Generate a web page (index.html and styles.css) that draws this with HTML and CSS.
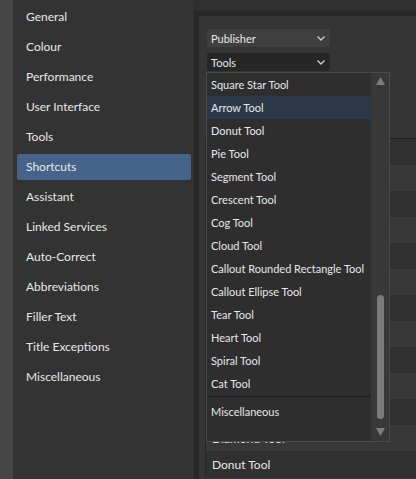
FILE: index.html
```html
<!DOCTYPE html>
<html lang="en">
<head>
  <meta charset="UTF-8">
  <meta name="viewport" content="width=device-width, initial-scale=1.0">
  <title>Preferences - Shortcuts</title>
  <link rel="stylesheet" href="styles.css">
</head>
<body>
  <div class="edge"></div>

  <nav class="sidebar">
    <div class="nav-item">General</div>
    <div class="nav-item">Colour</div>
    <div class="nav-item">Performance</div>
    <div class="nav-item">User Interface</div>
    <div class="nav-item">Tools</div>
    <div class="nav-item selected">Shortcuts</div>
    <div class="nav-item">Assistant</div>
    <div class="nav-item">Linked Services</div>
    <div class="nav-item">Auto-Correct</div>
    <div class="nav-item">Abbreviations</div>
    <div class="nav-item">Filler Text</div>
    <div class="nav-item">Title Exceptions</div>
    <div class="nav-item">Miscellaneous</div>
  </nav>

  <main>
    <div class="panel">
      <div class="content">
        <div class="selects">
          <div class="select light">
            <span>Publisher</span>
            <svg class="chevron" width="8" height="5" viewBox="0 0 8 5"><polyline points="0.5,0.5 4,4 7.5,0.5" fill="none" stroke="#cfcfcf" stroke-width="1.3"/></svg>
          </div>
          <div class="select dark">
            <span>Tools</span>
            <svg class="chevron" width="8" height="5" viewBox="0 0 8 5"><polyline points="0.5,0.5 4,4 7.5,0.5" fill="none" stroke="#cfcfcf" stroke-width="1.3"/></svg>
          </div>
        </div>

        <div class="table">
          <div class="row"></div>
          <div class="row"></div>
          <div class="row"></div>
          <div class="row"></div>
          <div class="row"></div>
          <div class="row"></div>
          <div class="row"></div>
          <div class="row"></div>
          <div class="row"></div>
          <div class="row"></div>
          <div class="row"></div>
          <div class="row">Diamond Tool</div>
          <div class="row">Donut Tool</div>
        </div>

        <!-- open dropdown for the Tools select -->
        <div class="dropdown">
          <div class="options">
            <div class="option">Square Star Tool</div>
            <div class="option hover">Arrow Tool</div>
            <div class="option">Donut Tool</div>
            <div class="option">Pie Tool</div>
            <div class="option">Segment Tool</div>
            <div class="option">Crescent Tool</div>
            <div class="option">Cog Tool</div>
            <div class="option">Cloud Tool</div>
            <div class="option">Callout Rounded Rectangle Tool</div>
            <div class="option">Callout Ellipse Tool</div>
            <div class="option">Tear Tool</div>
            <div class="option">Heart Tool</div>
            <div class="option">Spiral Tool</div>
            <div class="option">Cat Tool</div>
            <div class="separator"></div>
            <div class="option">Miscellaneous</div>
          </div>
          <div class="scrollbar">
            <svg width="9" height="8" viewBox="0 0 9 8"><polygon points="4.5,0 9,8 0,8" fill="#7c7c7c"/></svg>
            <div class="track"><div class="thumb"></div></div>
            <svg width="9" height="8" viewBox="0 0 9 8"><polygon points="0,0 9,0 4.5,8" fill="#7c7c7c"/></svg>
          </div>
        </div>
      </div>
    </div>
  </main>
</body>
</html>
```

FILE: styles.css
```css
/* Global */
body {
  margin: 0;
  padding: 0;
  background: #2f2f2f;
  font-family: 'Lato', 'Noto Sans', sans-serif;
  font-size: 12px;
  color: #e8e8e8;
  display: flex;
  height: 479px;
  overflow: hidden;
}

.edge {
  width: 13px;
  flex-shrink: 0;
  background: #474747;
}

/* Sidebar */
.sidebar {
  width: 181px;
  flex-shrink: 0;
  background: #333333;
  padding: 4px 3px 0 4px;
  box-sizing: border-box;
  display: flex;
  flex-direction: column;
  gap: 4px;
}

.nav-item {
  height: 26px;
  line-height: 25px;
  padding-left: 9px;
  border-radius: 2px;
  white-space: nowrap;
}

.nav-item.selected {
  background: #46648a;
}

/* Main area */
main {
  flex: 1;
  padding-top: 11px;
  display: flex;
  flex-direction: column;
}

.panel {
  flex: 1;
  background: #282828;
  padding: 5px 0 0 5px;
  display: flex;
}

.content {
  flex: 1;
  background: #353535;
  position: relative;
  display: flex;
  flex-direction: column;
}

.selects {
  padding: 13px 0 0 8px;
  display: flex;
  flex-direction: column;
  gap: 6px;
  font-size: 11px;
}

.select {
  width: 123px;
  height: 18px;
  box-sizing: border-box;
  border-radius: 3px;
  padding: 1px 5px 0 4px;
  display: flex;
  align-items: center;
  justify-content: space-between;
}

.select.light {
  background: #3f3f3f;
}

.select.dark {
  background: #262626;
}

/* Shortcut table behind the dropdown */
.table {
  margin: 67px 0 0 6px;
  border-top: 1px solid #1f1f1f;
  border-left: 1px solid #262626;
  font-size: 12px;
}

.row {
  height: 26px;
  line-height: 27px;
  padding-left: 6px;
  background: #303030;
}

.row:nth-child(even) {
  background: #383838;
}

/* Dropdown list */
.dropdown {
  position: absolute;
  left: 7px;
  top: 56px;
  width: 184px;
  height: 370px;
  box-sizing: border-box;
  border: 1px solid #4b4b4b;
  background: #2e2e2e;
  display: flex;
  font-size: 11px;
}

.options {
  flex: 1;
}

.option {
  height: 23px;
  line-height: 24px;
  padding-left: 4px;
  white-space: nowrap;
}

.option.hover {
  background: #2a3847;
}

.separator {
  height: 1px;
  margin: 1px 0 3px;
  background: #1b1b1b;
}

.scrollbar {
  width: 18px;
  background: #383838;
  display: flex;
  flex-direction: column;
  align-items: center;
  padding: 4px 0 5px;
  box-sizing: border-box;
}

.track {
  flex: 1;
  width: 7px;
  display: flex;
  flex-direction: column;
  justify-content: flex-end;
  padding: 0 0 9px;
}

.thumb {
  height: 124px;
  background: #7a7a7a;
  border-radius: 4px;
}
```
